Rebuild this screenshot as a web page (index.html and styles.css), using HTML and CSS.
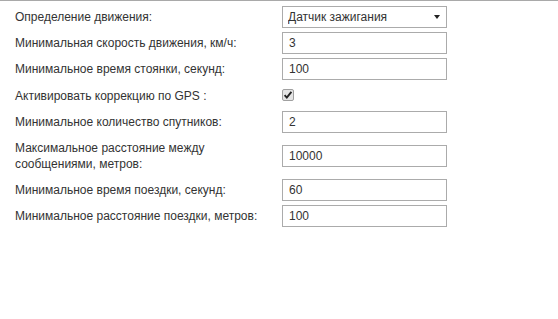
FILE: index.html
```html
<!DOCTYPE html>
<html lang="ru">
<head>
<meta charset="utf-8">
<title>Настройки движения</title>
<link rel="stylesheet" href="styles.css">
</head>
<body>
<div class="panel">
  <div class="form">
    <label class="lbl">Определение движения:</label>
    <div class="ctl">
      <div class="select-wrap">
        <select class="field sel"><option>Датчик зажигания</option></select>
        <span class="caret"></span>
      </div>
    </div>

    <label class="lbl">Минимальная скорость движения, км/ч:</label>
    <div class="ctl"><input class="field" type="text" value="3"></div>

    <label class="lbl">Минимальное время стоянки, секунд:</label>
    <div class="ctl"><input class="field" type="text" value="100"></div>

    <label class="lbl">Активировать коррекцию по GPS :</label>
    <div class="ctl"><input class="chk" type="checkbox" checked></div>

    <label class="lbl">Минимальное количество спутников:</label>
    <div class="ctl"><input class="field" type="text" value="2"></div>

    <label class="lbl">Максимальное расстояние между сообщениями, метров:</label>
    <div class="ctl"><input class="field" type="text" value="10000"></div>

    <label class="lbl">Минимальное время поездки, секунд:</label>
    <div class="ctl"><input class="field" type="text" value="60"></div>

    <label class="lbl">Минимальное расстояние поездки, метров:</label>
    <div class="ctl"><input class="field" type="text" value="100"></div>
  </div>
</div>
</body>
</html>
```

FILE: styles.css
```css
html, body {
  margin: 0;
  padding: 0;
  background: #fff;
}

body {
  font-family: "Liberation Sans", Arial, sans-serif;
  font-size: 12px;
  color: #333;
}

.panel {
  border-top: 1px solid #a9a9a9;
  padding: 3px 0 0 10px;
}

.form {
  display: grid;
  grid-template-columns: 267px 175px;
  align-items: center;
}

.lbl {
  padding: 5px 5px;
  line-height: 16px;
}

.ctl {
  padding: 2px 5px;
  display: flex;
  align-items: center;
}

.field {
  box-sizing: border-box;
  width: 165px;
  height: 22px;
  margin: 0;
  border: 1px solid #ababab;
  border-radius: 0;
  background: #fff;
  padding: 0 6px;
  font-family: "Liberation Sans", Arial, sans-serif;
  font-size: 12px;
  color: #333;
  outline: none;
}

.select-wrap {
  position: relative;
  width: 165px;
  height: 22px;
}

.sel {
  -webkit-appearance: none;
  appearance: none;
  padding-left: 5px;
}

.caret {
  position: absolute;
  right: 7px;
  top: 9px;
  width: 0;
  height: 0;
  border-left: 3px solid transparent;
  border-right: 3px solid transparent;
  border-top: 4px solid #222;
}

.chk {
  -webkit-appearance: none;
  appearance: none;
  box-sizing: border-box;
  width: 12px;
  height: 12px;
  margin: 5px 0 6px 0;
  border: 1px solid #a0a0a0;
  border-radius: 2px;
  background-color: #e4e4e4;
  background-image: url("data:image/svg+xml;utf8,<svg xmlns='http://www.w3.org/2000/svg' width='10' height='10' viewBox='0 0 10 10'><path d='M1.6 5.2 L3.8 7.6 L8.4 1.8' fill='none' stroke='%23222' stroke-width='1.9'/></svg>");
  background-repeat: no-repeat;
  background-position: center;
}
```
